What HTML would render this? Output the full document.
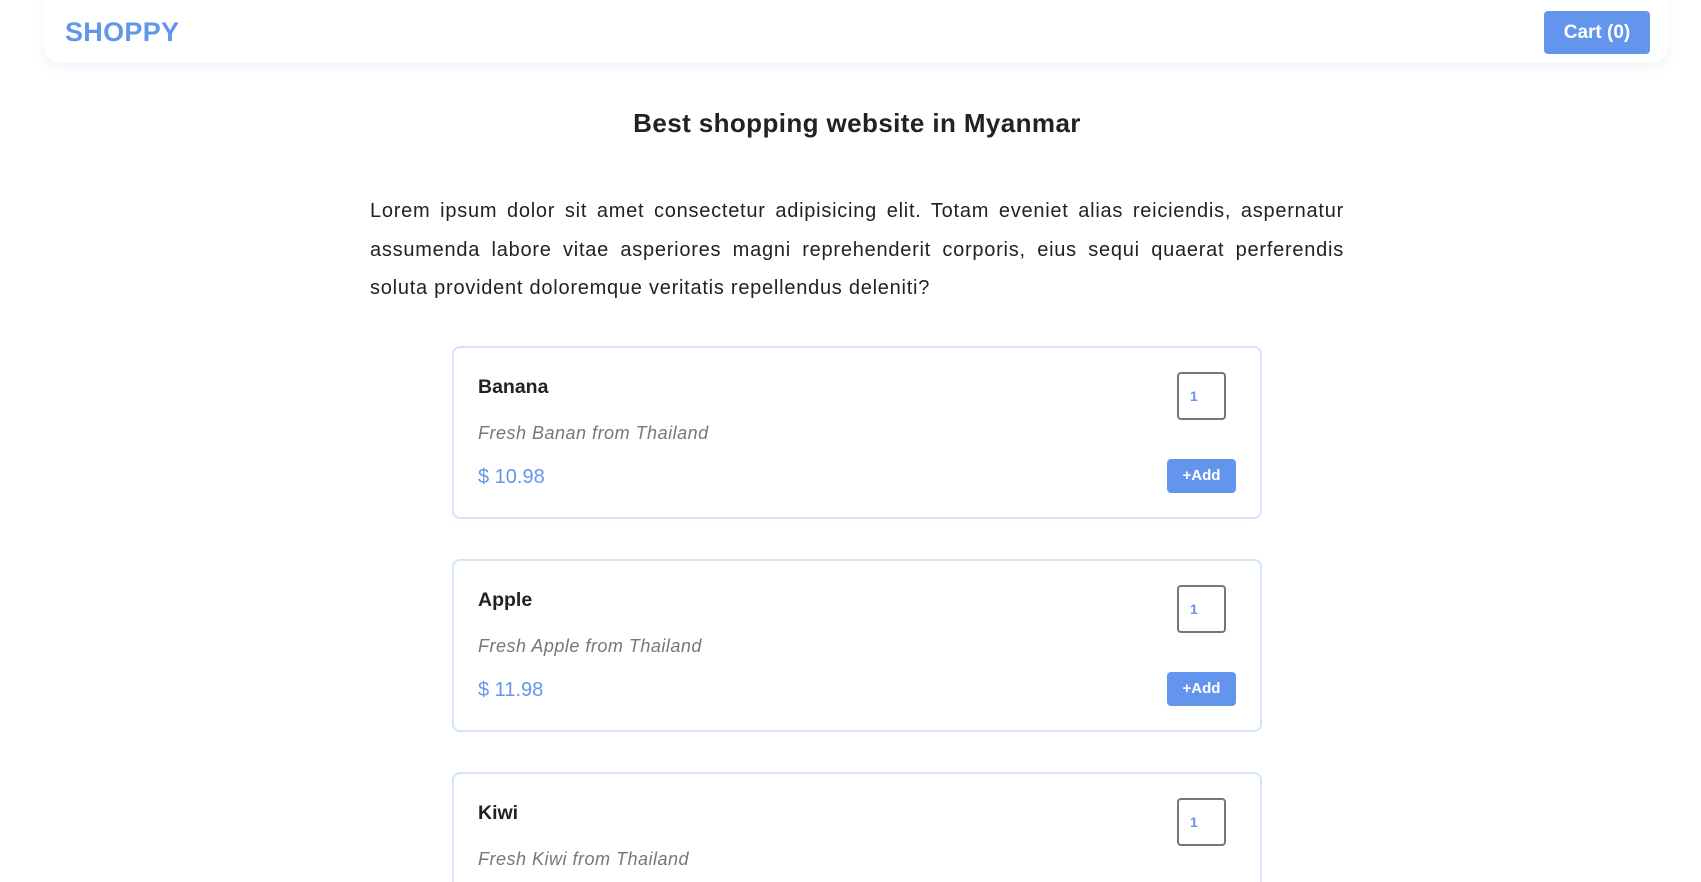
<!DOCTYPE html>
<html style="width:1701px;height:882px;overflow:hidden"><head><meta charset="utf-8"><style>
*{box-sizing:border-box;margin:0;padding:0}
body{width:1701px;height:882px;overflow:hidden;background:#fff;font-family:"Liberation Sans",sans-serif;color:#222}
#w{position:relative;width:1701px;height:882px;overflow:hidden}
.nav{position:absolute;left:44px;top:0;width:1624px;height:63px;background:#fff;border-radius:0 0 18px 18px;box-shadow:0 4px 14px rgba(100,140,240,0.10)}
.logo{position:absolute;left:21px;top:17px;font-size:27px;font-weight:bold;color:#6495ed;letter-spacing:0.3px}
.cart{position:absolute;left:1500px;top:11px;width:106px;height:43px;background:#6495ed;color:#fff;border-radius:4px;font-size:19px;font-weight:bold;text-align:center;line-height:43px}
h1{position:absolute;left:0;width:1714px;top:108px;text-align:center;font-size:26px;font-weight:bold;color:#222;letter-spacing:0.4px}
p.t{position:absolute;left:370px;top:192px;width:974px;font-size:20px;letter-spacing:0.75px;line-height:38.5px;text-align:justify;color:#222}
.card{position:absolute;left:452px;width:810px;height:173px;border:2px solid #d5e4fb;border-radius:8px;background:#fff}
.card .n{position:absolute;left:24px;top:28px;font-size:19.5px;font-weight:bold;color:#222}
.card .d{position:absolute;left:24px;top:75px;font-size:18px;font-style:italic;color:#777;letter-spacing:0.5px}
.card .p{position:absolute;left:24px;top:118px;font-size:20px;color:#6495ed}
.card .q{position:absolute;left:723px;top:24px;width:49px;height:48px;border:2px solid #777;border-radius:4px;font-size:14px;font-weight:bold;color:#6495ed;padding-left:11px;line-height:44px}
.card .a{position:absolute;left:713px;top:111px;width:69px;height:34px;background:#6495ed;color:#fff;border-radius:4px;font-size:15px;font-weight:bold;text-align:center;line-height:34px}
</style></head><body><div id="w">
<div class="nav"><div class="logo">SHOPPY</div><div class="cart">Cart (0)</div></div>
<h1>Best shopping website in Myanmar</h1>
<p class="t">Lorem ipsum dolor sit amet consectetur adipisicing elit. Totam eveniet alias reiciendis, aspernatur assumenda labore vitae asperiores magni reprehenderit corporis, eius sequi quaerat perferendis soluta provident doloremque veritatis repellendus deleniti?</p>
<div class="card" style="top:346px"><div class="n">Banana</div><div class="d">Fresh Banan from Thailand</div><div class="p">$ 10.98</div><div class="q">1</div><div class="a">+Add</div></div>
<div class="card" style="top:559px"><div class="n">Apple</div><div class="d">Fresh Apple from Thailand</div><div class="p">$ 11.98</div><div class="q">1</div><div class="a">+Add</div></div>
<div class="card" style="top:772px"><div class="n">Kiwi</div><div class="d">Fresh Kiwi from Thailand</div><div class="p">$ 9.98</div><div class="q">1</div><div class="a">+Add</div></div>
</div></body></html>
